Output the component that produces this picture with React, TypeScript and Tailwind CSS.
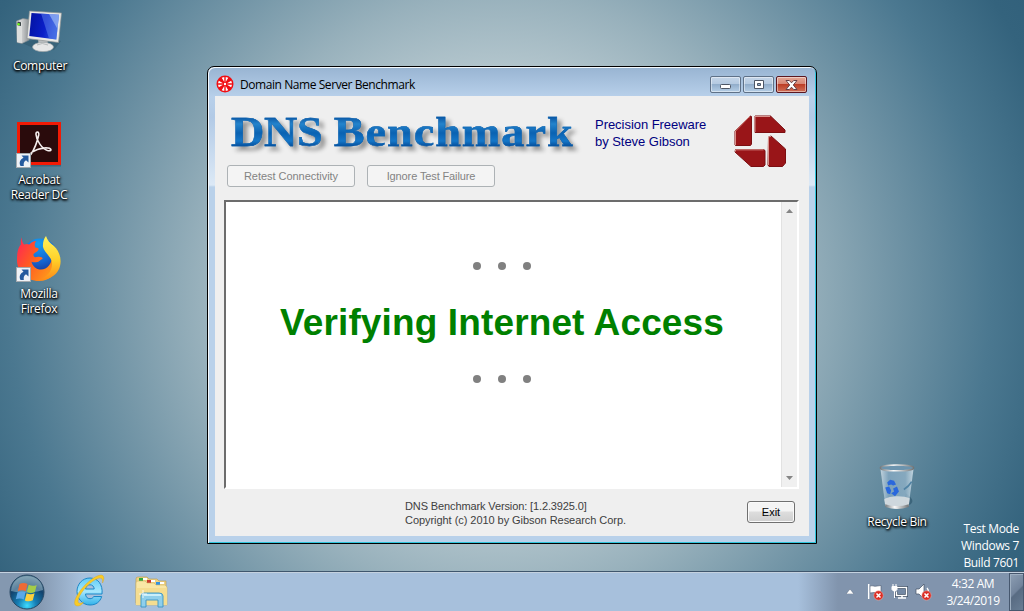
import type { ReactNode } from "react";

const ui = "font-['Open_Sans','Noto_Sans',sans-serif]";
const arial = "font-['Liberation_Sans',Arial,sans-serif]";

function ComputerIcon() {
  return (
    <svg width="48" height="48" viewBox="0 0 48 48">
      <defs>
        <linearGradient id="screen" x1="0" y1="0" x2="1" y2="0.2">
          <stop offset="0" stopColor="#0212a0" />
          <stop offset="0.6" stopColor="#0a1fc8" />
          <stop offset="1" stopColor="#2a55dc" />
        </linearGradient>
        <linearGradient id="case" x1="0" y1="0" x2="1" y2="0">
          <stop offset="0" stopColor="#e9e9e9" />
          <stop offset=".5" stopColor="#c4c6c7" />
          <stop offset="1" stopColor="#8e9395" />
        </linearGradient>
      </defs>
      <path d="M6 37 20 33 34 32 45 35 38 44 24 45z" fill="#1d4154" opacity=".3" />
      <path d="M.5 15 7 12.500l6 1V34l-7 3.500-5-1z" fill="url(#case)" stroke="#858b8e" strokeWidth=".6" />
      <path d="M1 15l5 1v21l-5-1z" fill="#dcdedd" />
      <path d="M1.500 15.500l3.500.7V20l-3.500-.7z" fill="#3b4546" />
      <circle cx="2.600" cy="18.200" r="1.200" fill="#6dfc16" />
      <path d="M22 33h10l-1 8h-8z" fill="#b9bdbf" />
      <ellipse cx="27" cy="41" rx="10.500" ry="4.600" fill="#e6e7e7" stroke="#a3a9ab" strokeWidth=".7" />
      <path d="M21 39q5-3 11 0" fill="none" stroke="#b6babb" />
      <path d="M13.500 5 45.500 7 42.500 36.500 11 32.500z" fill="#e9e9e6" stroke="#8c9294" strokeWidth=".7" />
      <path d="M15.500 7 43 8.700 40.300 33.500 13.300 30z" fill="url(#screen)" />
      <path d="M25 7.600 43 8.700 40.300 33.500 33 32.500z" fill="#5f86ee" opacity=".5" />
      <path d="M33 8.100 43 8.700 41.500 23z" fill="#a9c4f8" opacity=".6" />
    </svg>
  );
}

function ShortcutArrow() {
  return (
    <svg className="absolute bottom-0 left-[1px]" width="15" height="15" viewBox="0 0 15 15">
      <rect x=".5" y=".5" width="14" height="14" fill="#eef2f7" stroke="#a3a9ae" />
      <path d="M5.500 2.500h7v7L10 7.300C8 8.500 7.400 10 7.800 13H4.500C2.800 9.500 4 6.300 7.500 4.700z" fill="#245a9e" />
    </svg>
  );
}

function AcrobatIcon() {
  return (
    <svg className="-translate-x-[1px]" width="46" height="46" viewBox="0 0 46 46">
      <rect x="2" y="1" width="45" height="43.500" fill="#1d4154" opacity=".4" />
      <rect x="2" y="0" width="44" height="43" fill="#f21a05" />
      <rect x="5" y="3" width="38" height="37" fill="#2a0b0c" />
      <path
        d="M13 33.500c-1 .8 1.500.8 3-1.300C19.500 27 22.500 18.500 23.700 13c.7-4-3-4-2.700-.5.4 6 6 14.300 11.500 16 4.500 1 4.500-2 .5-2.500C27 25.200 17.500 28.500 13 33.500z"
        fill="none"
        stroke="#f4eeee"
        strokeWidth="1.600"
      />
    </svg>
  );
}

function FirefoxIcon() {
  return (
    <svg className="-translate-x-[1px]" width="46" height="46" viewBox="0 0 46 46">
      <defs>
        <linearGradient id="fox" x1="0.05" y1="0.2" x2="0.9" y2="0.7">
          <stop offset="0" stopColor="#ff2f4c" />
          <stop offset=".4" stopColor="#ff5a22" />
          <stop offset="1" stopColor="#ff9a1a" />
        </linearGradient>
        <linearGradient id="tail" x1="0" y1="0" x2="0" y2="1">
          <stop offset="0" stopColor="#fff35c" />
          <stop offset=".55" stopColor="#ffd028" />
          <stop offset="1" stopColor="#ff8a17" />
        </linearGradient>
        <radialGradient id="globe" cx=".45" cy=".15" r=".85">
          <stop offset="0" stopColor="#149ef2" />
          <stop offset=".6" stopColor="#1564cf" />
          <stop offset="1" stopColor="#1b2f8d" />
        </radialGradient>
      </defs>
      <circle cx="25" cy="20.500" r="18" fill="url(#globe)" />
      <path
        d="M7 1C6.500 4 7.500 7 9 8.500c2-.8 4-.8 5.500 0C16 6.500 18.500 5 21 5c-1.500 2-1.700 4.500-.7 6.500 3.500.2 3.700 1 2.700 3-1 1.500-3.500 2.300-4.500 3.500-.3 2.500.8 3.500 3.500 3 3-.7 6 .3 5.500 2-2 0-2.500 3-6.500 3.300-2 .2-3.500-.2-4.500-.6C17.500 30 21 33.500 26 33.500c7 0 12-7 11-16l7.500 6C44 37 35 45 24 45 11 45 2 36 2 24 2 15.500 3.500 11 6 8.500 5.500 6 6 3 7 1z"
        fill="url(#fox)"
      />
      <path d="M31 0c1 4 4 7 8 10 7 7 8 16 5 23-4 8-12 11.500-21 11 9-2 14.500-9 14-17-.3-6-8-11-9-16-.4-4 .7-8 3-11z" fill="url(#tail)" />
    </svg>
  );
}

function RecycleBinIcon() {
  return (
    <svg width="40" height="47" viewBox="0 0 40 48">
      <defs>
        <linearGradient id="glass" x1="0" y1="0" x2="1" y2="0">
          <stop offset="0" stopColor="#d8e4ec" stopOpacity=".8" />
          <stop offset=".25" stopColor="#86aac4" stopOpacity=".75" />
          <stop offset=".75" stopColor="#93b4ca" stopOpacity=".75" />
          <stop offset="1" stopColor="#dbe8f0" stopOpacity=".8" />
        </linearGradient>
        <linearGradient id="metal" x1="0" y1="0" x2="1" y2="0">
          <stop offset="0" stopColor="#767b7e" />
          <stop offset=".4" stopColor="#fafafa" />
          <stop offset="1" stopColor="#707476" />
        </linearGradient>
      </defs>
      <path d="M29 31q10 7 5 11l-7 3z" fill="#153b52" opacity=".4" />
      <path d="M3 5h34l-5 38q-12 4-24 0z" fill="url(#glass)" />
      <path d="M7 37c5-4 20-4 26-1l-1 8q-12 4-24 0z" fill="#dce1e3" opacity=".85" />
      <path d="M8 42q12 4 24 0v3q-12 4-24 0z" fill="url(#metal)" />
      <ellipse cx="20" cy="5" rx="17" ry="3" fill="#6c94ae" stroke="url(#metal)" strokeWidth="1.600" />
      <path d="M35 19Q32 24 27 27" stroke="#5183a4" strokeWidth="1.800" fill="none" />
      <path d="M10 20l3-3 4 1 2 4-3 1-2-1-3 1zM8 25l4-1 2 4-1 4-3-1zM16 26l4-2 2 5-4 5-4-3 3-2z" fill="#2a68dc" />
    </svg>
  );
}

function StartOrb() {
  return (
    <svg width="38" height="38" viewBox="0 0 38 38">
      <defs>
        <radialGradient id="orb" cx=".5" cy=".9" r=".85">
          <stop offset="0" stopColor="#3fdcff" />
          <stop offset=".32" stopColor="#167eb4" />
          <stop offset=".7" stopColor="#12426c" />
          <stop offset="1" stopColor="#4d7790" />
        </radialGradient>
      </defs>
      <circle cx="19" cy="19" r="17" fill="url(#orb)" stroke="#274763" />
      <path d="M3 18C4 7 12 3 19 3s15 4 16 14c-10 3-21 4-32 1z" fill="#e0f0f4" opacity=".36" />
      <path d="M11.500 11q4-2 8 0l-1.700 7.200q-4-1.800-8 0z" fill="#ee6a35" />
      <path d="M20.700 11.700q4 2 8 .2l-1.800 7q-4 2-8 0z" fill="#a4cc48" />
      <path d="M9.500 19.500q4-2 8-.2l-1.700 7.200q-4-2-8-.2z" fill="#5aa8e8" />
      <path d="M18.600 20.200q4 2 8 .1l-1.800 7q-4 2-8 .1z" fill="#fdcf3c" />
    </svg>
  );
}

function ExplorerE() {
  return (
    <svg width="34" height="34" viewBox="0 0 34 34">
      <defs>
        <linearGradient id="ie" x1="0" y1="0" x2="0" y2="1">
          <stop offset="0" stopColor="#62cdf6" />
          <stop offset=".5" stopColor="#a5e6fc" />
          <stop offset="1" stopColor="#32b3ea" />
        </linearGradient>
      </defs>
      <path
        fillRule="evenodd"
        d="M17 4C9 4 4 10.500 4 17.500S9.500 31 17 31c6 0 10-3 11.700-8.500h-8c-.6 1.500-2 2.200-3.700 2.200-2.700 0-4.300-1.700-4.500-4.700H29C30 10.500 25 4 17 4zm-4.500 11c.6-2.800 2.200-4.200 4.500-4.200s4 1.500 4.200 4.200z"
        fill="url(#ie)"
        stroke="#1b87c8"
      />
      <path d="M7 31.500C1 33.500-.5 28.500 5 20 11 10 22 1.500 28 1c3.500.3 3.500 4 1.500 8 .6-4-1-5.500-4-4.700C18 6.500 8 17.500 5.500 24.500c-1.300 4 0 6 5 3.800C9.500 29.500 8.500 30.700 7 31.500z" fill="#f9cb26" stroke="#d9a31c" strokeWidth=".4" />
    </svg>
  );
}

function FolderIcon() {
  return (
    <svg width="34" height="32" viewBox="0 0 34 32">
      <path d="M2 3q0-2 2-2h9l2 2h8l2 2h7v22H2z" fill="#eed386" stroke="#bd9843" strokeWidth=".6" />
      <path d="M5 2h4v3H5z" fill="#32a83c" />
      <path d="M13 4h4v3h-4z" fill="#cc3a2d" />
      <path d="M22 6h4v3h-4z" fill="#3292e1" />
      <path d="M9 2h4v2H9zM17 4h4v2h-4zM26 6h4v2h-4z" fill="#fff" />
      <path d="M2 7q0-2 2-2h7l2 2h7l2 2h9l2 2v18H2z" fill="#f9e7a5" stroke="#d2b664" strokeWidth=".6" />
      <path d="M2 12h31v17H2z" fill="#f5dd90" />
      <path d="M7 31V20q0-3 3-3h15q4 0 4 3v11h-5v-7H12v7z" fill="#8fcfeb" stroke="#3a94c3" strokeWidth=".9" />
      <path d="M10 19h17" stroke="#ddf8ff" strokeWidth="1.500" />
      <path d="M9 14v8M5 18h8" stroke="#fff" opacity=".8" />
    </svg>
  );
}

function GrcLogo() {
  return (
    <svg width="53" height="53" viewBox="0 0 53 53">
      <g fill="#991518" stroke="#7c0f12" strokeWidth="1" strokeLinejoin="round">
        <path d="M15.500 1.500 17 1l.5 1v27l-1 1.500H2L1 30V16z" />
        <path d="M21 1h15.500L51 15v2.500H21z" />
        <path d="M34.500 22l2.500-1 14.500 13v14l-3 3.500H35l-1-1.500z" />
        <path d="M1.500 34.500h28l1.500 1V50l-1.500 1.500H17L1 37z" />
      </g>
      <path
        d="M16 1.500 15 2 1.500 16v14M21 17V1.500h15M34.500 50V22l2.500-.7M1.500 36.500v-1.700h28"
        fill="none"
        stroke="#d9928c"
        strokeWidth="1"
      />
    </svg>
  );
}

function WheelIcon() {
  return (
    <svg width="18" height="18" viewBox="0 0 18 18">
      <circle cx="9" cy="9" r="8.500" fill="#f00d12" />
      <g fill="#fff">
        <path d="M5.700 2.800 8.300 2v5zM12.300 2.800 9.700 2v5zM15.200 5.700l.8 2.600h-5zM15.200 12.300l.8-2.600h-5zM12.300 15.200l-2.600.8v-5zM5.700 15.200l2.600.8v-5zM2.800 12.300 2 9.700h5zM2.800 5.700 2 8.300h5z" />
        <circle cx="9" cy="9" r="1.200" />
      </g>
    </svg>
  );
}

function RedCross({ x, y }: { x: number; y: number }) {
  return (
    <g transform={`translate(${x} ${y})`}>
      <circle cx="0" cy="0" r="4.700" fill="#db2e25" stroke="#f3b3a9" strokeWidth=".5" />
      <path d="m-2-2 4 4m0-4-4 4" stroke="#fff" strokeWidth="1.500" />
    </g>
  );
}

function DesktopItem({ className, icon, children }: { className: string; icon: ReactNode; children: ReactNode }) {
  return (
    <div className={`absolute flex w-[80px] flex-col items-center ${className}`}>
      <div className="relative flex h-[50px] w-[48px] items-end justify-center">{icon}</div>
      <div className="mt-[4px] text-center text-[12px] leading-[15px] tracking-[-0.3px] whitespace-nowrap text-white [text-shadow:0_1px_2px_#000,1px_1px_3px_#000,0_1px_3px_#000]">
        {children}
      </div>
    </div>
  );
}

function CaptionButton({ close = false, children }: { close?: boolean; children: ReactNode }) {
  const tone = close
    ? "border-[#5b1721] bg-[linear-gradient(#e4a797_0%,#d78776_45%,#bd3e27_50%,#cf7058_100%)]"
    : "border-[#5f7187] bg-[linear-gradient(#c4d5e8_0%,#b5cae1_45%,#92aecb_50%,#b5cee6_100%)]";
  return (
    <div className={`flex h-[17px] w-[31px] items-center justify-center rounded-[2px] border shadow-[inset_0_0_0_1px_rgba(255,255,255,.45)] ${tone}`}>
      {children}
    </div>
  );
}

function Dots() {
  return (
    <div className="flex justify-center gap-[17px] pr-[3px]">
      <span className="size-[8px] rounded-full bg-[#808080]" />
      <span className="size-[8px] rounded-full bg-[#808080]" />
      <span className="size-[8px] rounded-full bg-[#808080]" />
    </div>
  );
}

function BenchmarkWindow() {
  return (
    <div className="absolute top-[66px] left-[207px] flex h-[478px] w-[610px] flex-col rounded-t-[7px] border border-black bg-[#b9d1ea] bg-[linear-gradient(#98b4d2_0px,#b8d0ea_30px,#b2cae6_50px,#dce9f6_118px,#b9d1ea_120px)] shadow-[inset_1px_1px_0_#f4f9fd,inset_-1px_-1px_0_#2ec4dc]">
      <div className="flex h-[29px] shrink-0 items-start pr-[9px] pl-[8px]">
        <div className="mt-[8px]"><WheelIcon /></div>
        <span className="mt-[9px] ml-[6px] text-[12px] leading-[18px] tracking-[-0.43px] text-black">Domain Name Server Benchmark</span>
        <div className="mt-[9px] ml-auto flex gap-[2px]">
          <CaptionButton>
            <svg className="mt-[4px]" width="13" height="7" viewBox="0 0 13 7"><rect x="1.500" y="1.500" width="10" height="4" rx="1" fill="#fff" stroke="#4d5665" /></svg>
          </CaptionButton>
          <CaptionButton>
            <svg width="12" height="9" viewBox="0 0 12 9"><path fillRule="evenodd" d="M1.500 .5h9v8h-9zM4.500 3.500v2h3v-2z" fill="#fff" stroke="#4d5665" /></svg>
          </CaptionButton>
          <CaptionButton close>
            <svg width="13" height="10" viewBox="0 0 13 10"><path d="M1 .5h3.300l2.200 2.300L8.700.5H12L8.300 5 12 9.500H8.700L6.500 7.200 4.300 9.500H1L4.700 5z" fill="#fff" stroke="#654148" /></svg>
          </CaptionButton>
        </div>
      </div>
      <div className={`mx-[7px] mb-[7px] flex h-[440px] flex-col bg-[#efefef] ${arial}`}>
        <div className="flex h-[104px] shrink-0">
          <div className="w-[380px]">
            <h1 className="mt-[11px] ml-[16px] h-[50px] w-max origin-left scale-x-[1.1] bg-[linear-gradient(#0a56a4_10px,#2484cc_17px,#0a62b2_26px,#1577c8_34px,#064f9c_39px)] bg-clip-text font-['Liberation_Serif','Times_New_Roman',serif] text-[42px] leading-[50px] font-bold text-transparent drop-shadow-[4px_4px_2px_rgba(0,0,0,.38)] [-webkit-text-stroke:0.4px_#0b60ae]">
              <span className="tracking-[-0.3px]">DNS </span>
              <span className="tracking-[0.9px]">Benchmark</span>
            </h1>
            <div className="mt-[8px] ml-[12px] flex gap-[12px]">
              <button className="h-[22px] w-[128px] rounded-[3px] border border-[#adb2b5] bg-[#f4f4f4] text-[11px] tracking-[-0.03px] text-[#838383]">Retest Connectivity</button>
              <button className="h-[22px] w-[128px] rounded-[3px] border border-[#adb2b5] bg-[#f4f4f4] text-[11px] tracking-[-0.12px] text-[#838383]">Ignore Test Failure</button>
            </div>
          </div>
          <p className="mt-[20px] w-[139px] text-[13px] leading-[17px] tracking-[-0.04px] whitespace-nowrap text-[#000080]">Precision Freeware<br />by Steve Gibson</p>
          <div className="mt-[19px]"><GrcLogo /></div>
        </div>
        <div className="ml-[9px] flex h-[289px] w-[575px] shrink-0 border-2 border-t-[#6c6c6c] border-r-white border-b-white border-l-[#6c6c6c] bg-white">
          <div className="flex grow flex-col pt-[60px]">
            <Dots />
            <div className="mt-[29px] pr-[3px] text-center text-[37px] leading-[48px] font-bold tracking-[0.13px] text-[#008000]">Verifying Internet Access</div>
            <div className="mt-[28px]"><Dots /></div>
          </div>
          <div className="flex w-[16px] flex-col items-center justify-between border-l border-[#e2e2e2] bg-[#f0f0f0] py-[7px]">
            <svg width="7" height="4"><path d="M0 4h7L3.500 0z" fill="#858585" /></svg>
            <svg width="7" height="4"><path d="M0 0h7L3.500 4z" fill="#858585" /></svg>
          </div>
        </div>
        <div className="flex grow items-start">
          <p className="mt-[10px] ml-[190px] w-[342px] text-[11px] leading-[14px] whitespace-nowrap text-[#404040]">
            <span className="tracking-[-0.12px]">DNS Benchmark Version: [1.2.3925.0]</span>
            <br />
            <span className="tracking-[-0.05px]">Copyright (c) 2010 by Gibson Research Corp.</span>
          </p>
          <button className="mt-[12px] h-[22px] w-[48px] rounded-[3px] border border-[#707070] bg-[linear-gradient(#f4f4f4_45%,#dddddd_50%,#cfcfcf)] text-[11px] text-black shadow-[inset_0_0_0_1px_#fafafa]">Exit</button>
        </div>
      </div>
    </div>
  );
}

function Taskbar() {
  return (
    <div className="flex h-[40px] items-center border-t border-[#3f566d] bg-[linear-gradient(90deg,#8498b0_0px,#8498b0_38px,#a7c0dc_82px,#a7c0dc_798px,#8194ad_838px,#8194ad_1024px)] shadow-[inset_0_1px_0_#c4d1df]">
      <div className="ml-[8px]"><StartOrb /></div>
      <div className="ml-[27px] -mt-[2px]"><ExplorerE /></div>
      <div className="ml-[27px]"><FolderIcon /></div>
      <div className="ml-auto flex h-full items-center text-white">
        <svg width="8" height="5"><path d="M0 5h8L4 0z" fill="#fff" stroke="#56677e" strokeWidth=".5" /></svg>
        <svg className="mt-[1px] ml-[13px]" width="17" height="18" viewBox="0 0 17 18">
          <path d="M2 2v14M3 3c3-1 4 1 7 0l4-.5v7.500c-3 1-4-1-7-.5L3 10z" fill="#fff" stroke="#49596e" strokeWidth=".6" />
          <path d="M1.700 1v15" stroke="#fff" strokeWidth="1.500" />
          <RedCross x={11.500} y={12.500} />
        </svg>
        <svg className="ml-[7px]" width="17" height="17" viewBox="0 0 17 17">
          <path d="M6 4.500h9.500v8H5.500V8.500" fill="#7489a4" stroke="#35465c" strokeWidth="2.800" />
          <path d="M6 4.500h9.500v8H5.500V8.500M7 15h8M11 12v3" fill="none" stroke="#fff" strokeWidth="1.500" />
          <path d="M1 3.500h5v3L4.500 8h-2L1 6.500zM2 1v3m3-3v3M3.500 8v7" fill="#fff" stroke="#fff" />
        </svg>
        <svg className="mt-[1px] ml-[7px]" width="17" height="18" viewBox="0 0 17 18">
          <path d="M1 6h3l5-5v15l-5-5H1z" fill="#fff" stroke="#435166" strokeWidth=".7" />
          <path d="M12 5q2 2 1 4" fill="none" stroke="#fff" strokeWidth="1.300" />
          <RedCross x={11.500} y={12.500} />
        </svg>
        <div className="ml-[12px] w-[58px] text-center text-[12px] leading-[17px] tracking-[-0.4px] whitespace-nowrap">4:32 AM<br />3/24/2019</div>
        <div className="ml-[7px] h-[38px] w-[15px] self-end border border-[#46576e] bg-[linear-gradient(135deg,#8d9fb4_0%,#71839b_48%,#586b82_52%,#687d94)] shadow-[inset_1px_1px_0_#9eafc1]" />
      </div>
    </div>
  );
}

export default function App() {
  return (
    <div className={`relative flex h-[611px] w-[1024px] flex-col justify-end overflow-hidden bg-[radial-gradient(circle_at_500px_295px,#bdced4_0px,#b5c7ce_220px,#98b1bc_300px,#7597a8_385px,#4b7890_490px,#34637d_575px,#2f5e79_650px)] ${ui}`}>
      <DesktopItem className="top-[4px] left-0" icon={<ComputerIcon />}>Computer</DesktopItem>
      <DesktopItem className="top-[118px] left-[-1px]" icon={<><AcrobatIcon /><ShortcutArrow /></>}>Acrobat<br />Reader DC</DesktopItem>
      <DesktopItem className="top-[232px] left-[-1px]" icon={<><FirefoxIcon /><ShortcutArrow /></>}>Mozilla<br />Firefox</DesktopItem>
      <DesktopItem className="top-[460px] left-[857px]" icon={<RecycleBinIcon />}>Recycle Bin</DesktopItem>
      <BenchmarkWindow />
      <div className="mr-[5px] text-right text-[12px] leading-[17px] tracking-[-0.35px] text-white">Test Mode<br />Windows 7<br />Build 7601</div>
      <Taskbar />
    </div>
  );
}
